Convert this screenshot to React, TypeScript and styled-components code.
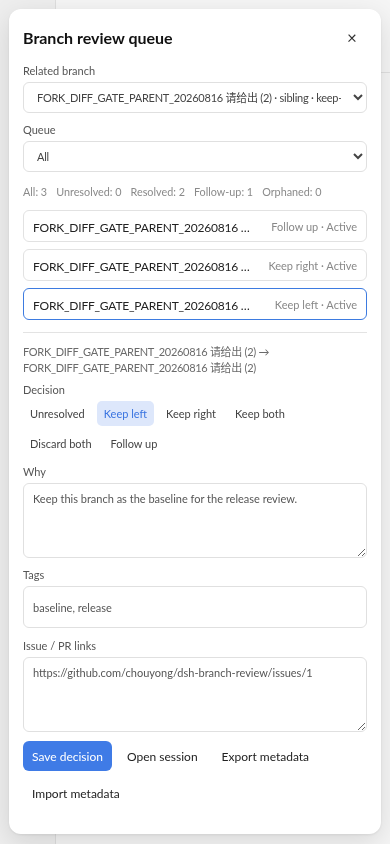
import React, { useState } from "react";
import styled, { createGlobalStyle } from "styled-components";

const GlobalStyle = createGlobalStyle`
  html, body { margin: 0; padding: 0; }
  body {
    font-family: Lato, "Noto Sans CJK SC", sans-serif;
    background: #f4f4f4;
  }
  * { box-sizing: border-box; }
`;

const Page = styled.div`
  display: flex;
  height: 844px;
  width: 390px;
  overflow: hidden;
`;

const Sidebar = styled.div`
  width: 56px;
  flex: none;
  background: #eeeeee;
  border-right: 1px solid #dedede;
`;

const Main = styled.div`
  flex: 1;
  background: #f5f5f5;
`;

const Topbar = styled.div`
  height: 73px;
  border-bottom: 1px solid #e0e0e0;
`;

const Modal = styled.div`
  position: fixed;
  top: 9px;
  left: 9px;
  width: 372px;
  height: 825px;
  background: #ffffff;
  border-radius: 12px;
  box-shadow: 0 8px 28px rgba(0, 0, 0, 0.12), 0 1px 3px rgba(0, 0, 0, 0.08);
  padding: 14px;
  display: flex;
  flex-direction: column;
`;

const Header = styled.div`
  display: flex;
  align-items: center;
  justify-content: space-between;
  height: 28px;
`;

const Title = styled.h2`
  margin: 0;
  font-size: 16px;
  font-weight: 700;
  color: #111;
`;

const CloseButton = styled.button`
  width: 30px;
  height: 28px;
  border: none;
  background: transparent;
  font-size: 17px;
  color: #333;
  cursor: pointer;
  padding: 0;
  font-family: inherit;
`;

const Label = styled.label<{ $mt: number }>`
  display: block;
  font-size: 11px;
  line-height: 16px;
  color: #555;
  margin-top: ${(p) => p.$mt}px;
  margin-bottom: 3px;
`;

const Select = styled.select`
  width: 100%;
  height: 31px;
  border: 1px solid #e0e0e0;
  border-radius: 6px;
  padding: 0 9px;
  font-size: 11px;
  letter-spacing: -0.25px;
  color: #444;
  background: #fff;
  font-family: inherit;
`;

const Stats = styled.div`
  display: flex;
  gap: 9px;
  font-size: 10.8px;
  line-height: 16px;
  color: #8a8a8a;
  margin-top: 12px;
`;

const List = styled.div`
  display: flex;
  flex-direction: column;
  gap: 7px;
  margin-top: 10px;
`;

const Item = styled.div<{ $selected?: boolean }>`
  height: 32px;
  display: flex;
  align-items: center;
  gap: 14px;
  padding: 0 9px;
  border: 1px solid ${(p) => (p.$selected ? "#3d7be0" : "#e2e2e2")};
  border-radius: 6px;
  background: #fff;
`;

const ItemName = styled.span`
  flex: 1;
  min-width: 0;
  overflow: hidden;
  text-overflow: ellipsis;
  white-space: nowrap;
  font-size: 12px;
  letter-spacing: -0.2px;
  color: #222;
`;

const ItemStatus = styled.span`
  flex: none;
  font-size: 11px;
  color: #888;
`;

const Divider = styled.hr`
  border: none;
  height: 1px;
  background: #e3e3e3;
  margin: 12px 0 0;
`;

const PathText = styled.div`
  font-size: 11px;
  letter-spacing: -0.3px;
  line-height: 16px;
  color: #6a6a6a;
  margin-top: 11px;
`;

const DecisionGroup = styled.div`
  display: flex;
  flex-wrap: wrap;
  gap: 5px 5px;
`;

const DecisionButton = styled.button<{ $active?: boolean }>`
  height: 25px;
  padding: 0 7px;
  border: none;
  border-radius: 5px;
  font-size: 11px;
  font-family: inherit;
  background: ${(p) => (p.$active ? "#dde7fb" : "transparent")};
  color: ${(p) => (p.$active ? "#3a74e0" : "#444")};
  cursor: pointer;
`;

const TextArea = styled.textarea<{ $h: number }>`
  width: 100%;
  height: ${(p) => p.$h}px;
  display: block;
  border: 1px solid #e0e0e0;
  border-radius: 6px;
  padding: 7px 9px;
  font-size: 11px;
  line-height: 16px;
  color: #555;
  font-family: inherit;
  resize: vertical;
`;

const TextInput = styled.input`
  width: 100%;
  height: 42px;
  display: block;
  border: 1px solid #e0e0e0;
  border-radius: 6px;
  padding: 0 9px;
  font-size: 11px;
  color: #555;
  font-family: inherit;
`;

const Actions = styled.div`
  display: flex;
  flex-wrap: wrap;
  gap: 7px 6px;
  margin-top: 9px;
`;

const ActionButton = styled.button<{ $primary?: boolean }>`
  height: 30px;
  padding: 0 9px;
  border: none;
  border-radius: 6px;
  font-size: 12px;
  font-family: inherit;
  background: ${(p) => (p.$primary ? "#3f7be6" : "transparent")};
  color: ${(p) => (p.$primary ? "#fff" : "#222")};
  cursor: pointer;
`;

const items = [
  { name: "FORK_DIFF_GATE_PARENT_20260816 请给出 (2)", status: "Follow up · Active" },
  { name: "FORK_DIFF_GATE_PARENT_20260816 请给出 (2)", status: "Keep right · Active" },
  { name: "FORK_DIFF_GATE_PARENT_20260816 请给出 (2)", status: "Keep left · Active", selected: true },
];

const decisions = ["Unresolved", "Keep left", "Keep right", "Keep both", "Discard both", "Follow up"];

export default function App() {
  const [decision, setDecision] = useState("Keep left");
  return (
    <>
      <GlobalStyle />
      <Page>
        <Sidebar />
        <Main>
          <Topbar />
        </Main>
      </Page>
      <Modal>
        <Header>
          <Title>Branch review queue</Title>
          <CloseButton aria-label="Close">×</CloseButton>
        </Header>
        <Label $mt={12}>Related branch</Label>
        <Select defaultValue="a">
          <option value="a">FORK_DIFF_GATE_PARENT_20260816 请给出 (2) · sibling · keep-left</option>
        </Select>
        <Label $mt={9}>Queue</Label>
        <Select defaultValue="all">
          <option value="all">All</option>
        </Select>
        <Stats>
          <span>All: 3</span>
          <span>Unresolved: 0</span>
          <span>Resolved: 2</span>
          <span>Follow-up: 1</span>
          <span>Orphaned: 0</span>
        </Stats>
        <List>
          {items.map((it, i) => (
            <Item key={i} $selected={it.selected}>
              <ItemName>{it.name}</ItemName>
              <ItemStatus>{it.status}</ItemStatus>
            </Item>
          ))}
        </List>
        <Divider />
        <PathText>
          FORK_DIFF_GATE_PARENT_20260816 请给出 (2) → FORK_DIFF_GATE_PARENT_20260816 请给出 (2)
        </PathText>
        <Label $mt={6}>Decision</Label>
        <DecisionGroup>
          {decisions.map((d) => (
            <DecisionButton key={d} $active={d === decision} onClick={() => setDecision(d)}>
              {d}
            </DecisionButton>
          ))}
        </DecisionGroup>
        <Label $mt={8}>Why</Label>
        <TextArea $h={75} defaultValue="Keep this branch as the baseline for the release review." />
        <Label $mt={9}>Tags</Label>
        <TextInput defaultValue="baseline, release" />
        <Label $mt={10}>Issue / PR links</Label>
        <TextArea $h={75} defaultValue="https://github.com/chouyong/dsh-branch-review/issues/1" />
        <Actions>
          <ActionButton $primary>Save decision</ActionButton>
          <ActionButton>Open session</ActionButton>
          <ActionButton>Export metadata</ActionButton>
          <ActionButton>Import metadata</ActionButton>
        </Actions>
      </Modal>
    </>
  );
}
